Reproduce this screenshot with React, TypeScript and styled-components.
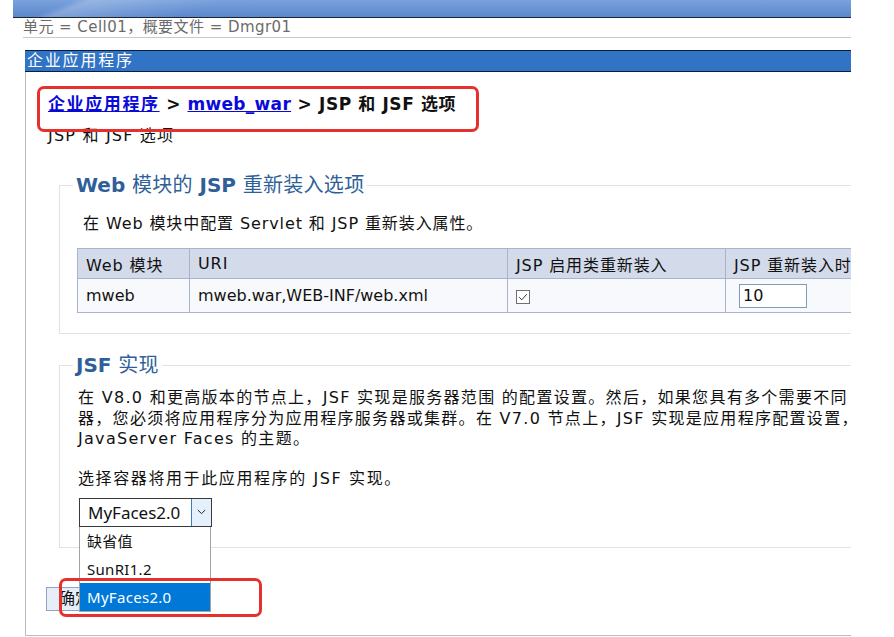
import React from "react";
import styled, { createGlobalStyle } from "styled-components";

const Global = createGlobalStyle`
  html, body { margin: 0; padding: 0; background: #ffffff; }
  body { font-family: "DejaVu Sans", "Noto Sans CJK SC", sans-serif; color: #111; }
  * { box-sizing: border-box; }
`;

const Page = styled.div`
  width: 894px;
  height: 637px;
  overflow: hidden;
  background: #fff;
`;

const Banner = styled.div`
  margin-left: 13px;
  width: 838px;
  height: 18px;
  border-bottom: 1px solid #1b2333;
  background:
    linear-gradient(158deg, rgba(255,255,255,0) 0 7%, rgba(255,255,255,0.22) 9%, rgba(255,255,255,0.08) 18%, rgba(255,255,255,0) 24%),
    linear-gradient(to bottom, #7aa2dc, #5b87cc);
`;

const Context = styled.div`
  margin-left: 23px;
  width: 828px;
  height: 20px;
  line-height: 19px;
  font-size: 15px;
  letter-spacing: 0.45px;
  color: #6b6b6b;
  border-bottom: 1px solid #c9c9c9;
  white-space: nowrap;
`;

const TitleBar = styled.div`
  margin-top: 12px;
  margin-left: 25px;
  width: 826px;
  height: 22px;
  line-height: 20px;
  padding-left: 2px;
  background: #3174c5;
  border-top: 1px solid #0d1e3c;
  border-bottom: 1px solid #0d1e3c;
  color: #fff;
  font-size: 16px;
  letter-spacing: 1.8px;
`;

const Panel = styled.div`
  margin-left: 25px;
  width: 826px;
  height: 564px;
  border-left: 1px solid #bdbdbd;
  border-bottom: 1px solid #bdbdbd;
  padding-left: 22px;
  overflow: hidden;
  position: relative;
`;

const Breadcrumb = styled.div`
  position: relative;
  margin-top: 21px;
  line-height: 22px;
  font-size: 17px;
  font-weight: 700;
  letter-spacing: 0.6px;
  white-space: nowrap;
`;

const Crumb = styled.a<{ $cjk?: boolean }>`
  color: #0a0ad8;
  text-decoration: underline;
  letter-spacing: ${(p) => (p.$cjk ? "1.6px" : "0.3px")};
`;

const Annotation = styled.div<{ $l: number; $t: number; $w: number; $h: number }>`
  position: absolute;
  left: ${(p) => p.$l}px;
  top: ${(p) => p.$t}px;
  width: ${(p) => p.$w}px;
  height: ${(p) => p.$h}px;
  border: 3px solid #e6302b;
  border-radius: 7px;
  z-index: 5;
  pointer-events: none;
`;

const Subtitle = styled.div`
  margin-top: 11px;
  line-height: 20px;
  font-size: 16px;
  letter-spacing: 1.2px;
`;

const Group = styled.fieldset<{ $mt: number }>`
  margin: ${(p) => p.$mt}px 0 0 11px;
  width: 900px;
  padding: 0 0 20px 0;
  border: 1px solid #e2e2e2;
  min-width: 0;
`;

const Legend = styled.legend`
  margin-left: 13px;
  padding: 0 3px;
  line-height: 24px;
  font-size: 20px;
  color: #2f5f99;
  font-weight: 400;
  letter-spacing: 0.3px;
  white-space: nowrap;
`;

const LegendStrong = styled.span`
  font-weight: 700;
  letter-spacing: 0;
`;

const GroupBody = styled.div<{ $pl: number }>`
  padding-left: ${(p) => p.$pl}px;
  position: relative;
`;

const Desc = styled.div`
  margin: 17px 0 0 6px;
  line-height: 20px;
  font-size: 16px;
  letter-spacing: 0.9px;
  white-space: nowrap;
`;

const Table = styled.table`
  margin-top: 14px;
  border-collapse: collapse;
  font-size: 16px;
  table-layout: fixed;
`;

const Th = styled.th<{ $w: number }>`
  width: ${(p) => p.$w}px;
  height: 30px;
  padding: 0 8px;
  text-align: left;
  font-weight: 400;
  background: #d3dae9;
  border: 1px solid #a8b4cc;
  white-space: nowrap;
  overflow: hidden;
  letter-spacing: 0.9px;
`;

const Td = styled.td`
  height: 34px;
  padding: 0 8px;
  background: #f8f9fc;
  border: 1px solid #a8b4cc;
  white-space: nowrap;
`;

const Check = styled.span`
  display: inline-flex;
  vertical-align: middle;
  width: 14px;
  height: 14px;
  border: 1px solid #6f6f6f;
  background: #fff;
  align-items: center;
  justify-content: center;
`;

const NumInput = styled.div`
  display: inline-block;
  vertical-align: middle;
  margin-left: 5px;
  width: 68px;
  height: 24px;
  line-height: 22px;
  border: 1px solid #7f9db9;
  background: #fff;
  padding-left: 3px;
  font-size: 16px;
`;

const Para = styled.div`
  margin: 11px 0 0 0;
  font-size: 16px;
  line-height: 20.5px;
  letter-spacing: 1.3px;
  white-space: nowrap;
`;

const Line = styled.div``;

const Prompt = styled.div`
  margin-top: 19px;
  line-height: 20px;
  font-size: 16px;
  letter-spacing: 1.6px;
  white-space: nowrap;
`;

const SelectWrap = styled.div`
  position: relative;
  margin: 9px 0 0 1px;
  width: 133px;
`;

const SelectBox = styled.div`
  display: flex;
  height: 29px;
  border: 1px solid #3a3a3a;
  background: #fff;
  font-family: "Noto Sans", "Noto Sans CJK SC", sans-serif;
  font-size: 17px;
`;

const SelectValue = styled.div`
  flex: 1;
  line-height: 27px;
  padding-left: 8px;
`;

const SelectArrow = styled.div`
  width: 20px;
  background: #e4f0fb;
  border-left: 1px solid #3d7fb8;
  display: flex;
  align-items: center;
  justify-content: center;
`;

const Menu = styled.div`
  position: absolute;
  left: 0;
  top: 100%;
  width: 132px;
  border: 1px solid #a3a3a3;
  border-top: none;
  background: #fff;
  z-index: 3;
  font-family: "Noto Sans", "Noto Sans CJK SC", sans-serif;
  font-size: 15px;
`;

const Option = styled.div<{ $sel?: boolean }>`
  height: 28px;
  line-height: 28px;
  padding-left: 7px;
  letter-spacing: 0.3px;
  background: ${(p) => (p.$sel ? "#0078d7" : "#fff")};
  color: ${(p) => (p.$sel ? "#fff" : "#111")};
`;

const ButtonRow = styled.div`
  position: relative;
  margin: 39px 0 0 -2px;
`;

const Button = styled.div`
  display: inline-block;
  height: 24px;
  line-height: 22px;
  padding: 0 10px 0 12px;
  border: 1px solid #8ea4c4;
  background: #e7eef8;
  font-size: 16px;
`;

const mweb = "mweb_war";

export default function App() {
  return (
    <Page>
      <Global />
      <Banner />
      <Context>单元 = Cell01，概要文件 = Dmgr01</Context>
      <TitleBar>企业应用程序</TitleBar>
      <Panel>
        <Breadcrumb>
          <Crumb $cjk href="#">企业应用程序</Crumb> &gt; <Crumb href="#">{mweb}</Crumb> &gt; JSP 和 JSF 选项
          <Annotation $l={-11} $t={-7} $w={442} $h={46} />
        </Breadcrumb>
        <Subtitle>JSP 和 JSF 选项</Subtitle>

        <Group $mt={27}>
          <Legend>
            <LegendStrong>Web</LegendStrong> 模块的 <LegendStrong>JSP</LegendStrong> 重新装入选项
          </Legend>
          <GroupBody $pl={17}>
            <Desc>在 Web 模块中配置 Servlet 和 JSP 重新装入属性。</Desc>
            <Table>
              <thead>
                <tr>
                  <Th $w={112}>Web 模块</Th>
                  <Th $w={318}>URI</Th>
                  <Th $w={218}>JSP 启用类重新装入</Th>
                  <Th $w={220}>JSP 重新装入时间间隔</Th>
                </tr>
              </thead>
              <tbody>
                <tr>
                  <Td>mweb</Td>
                  <Td>mweb.war,WEB-INF/web.xml</Td>
                  <Td>
                    <Check>
                      <svg width="10" height="10" viewBox="0 0 10 10">
                        <path d="M1.2 5.2 L3.8 7.8 L8.8 2.2" fill="none" stroke="#333" strokeWidth="1" />
                      </svg>
                    </Check>
                  </Td>
                  <Td>
                    <NumInput>10</NumInput>
                  </Td>
                </tr>
              </tbody>
            </Table>
          </GroupBody>
        </Group>

        <Group $mt={19}>
          <Legend>
            <LegendStrong>JSF</LegendStrong> 实现
          </Legend>
          <GroupBody $pl={18}>
            <Para>
              <Line>在 V8.0 和更高版本的节点上，JSF 实现是服务器范围 的配置设置。然后，如果您具有多个需要不同 JSF 实现的应用程序</Line>
              <Line>器，您必须将应用程序分为应用程序服务器或集群。在 V7.0 节点上，JSF 实现是应用程序配置设置，而不是服务器</Line>
              <Line>JavaServer Faces 的主题。</Line>
            </Para>
            <Prompt>选择容器将用于此应用程序的 JSF 实现。</Prompt>
            <SelectWrap>
              <SelectBox>
                <SelectValue>MyFaces2.0</SelectValue>
                <SelectArrow>
                  <svg width="9" height="6" viewBox="0 0 9 6">
                    <path d="M0.8 1 L4.5 4.6 L8.2 1" fill="none" stroke="#222" strokeWidth="1" />
                  </svg>
                </SelectArrow>
              </SelectBox>
              <Menu>
                <Option>缺省值</Option>
                <Option>SunRI1.2</Option>
                <Option $sel>MyFaces2.0</Option>
              </Menu>
            </SelectWrap>
          </GroupBody>
        </Group>

        <ButtonRow>
          <Button>确定</Button>
          <Annotation $l={13} $t={-9} $w={203} $h={39} />
        </ButtonRow>
      </Panel>
    </Page>
  );
}
